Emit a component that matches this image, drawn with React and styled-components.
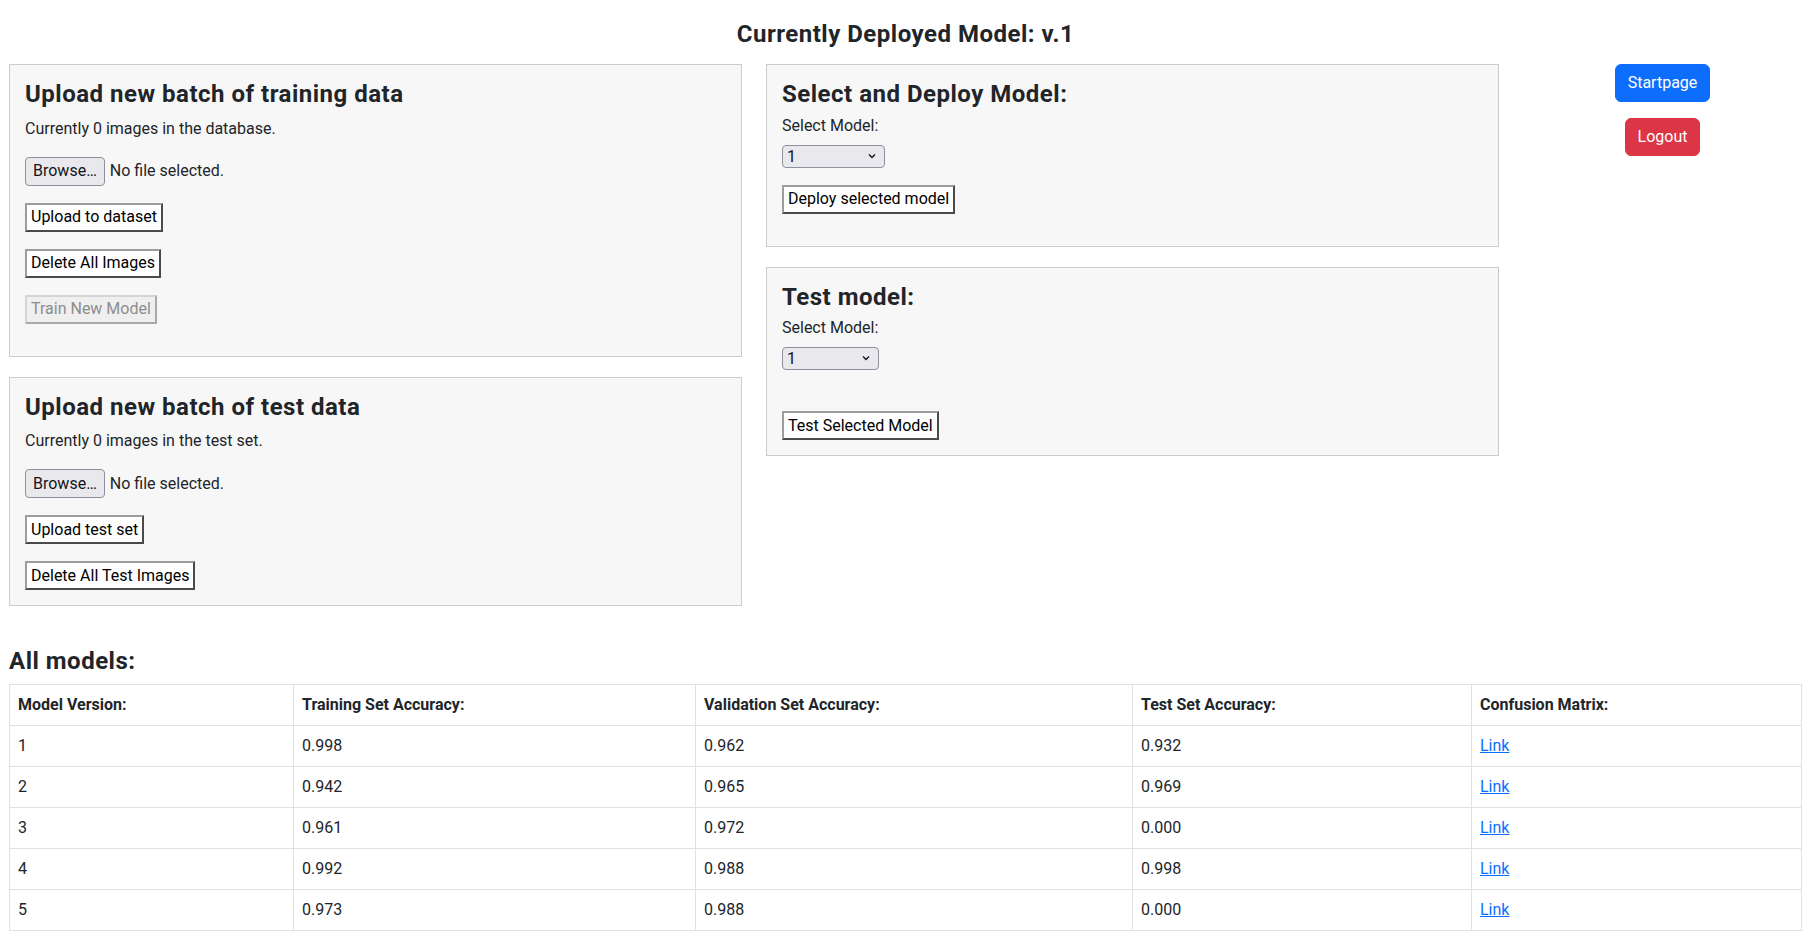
import styled, { createGlobalStyle } from "styled-components";

const GlobalStyle = createGlobalStyle`
  body {
    margin: 0;
    font-family: Roboto, "Noto Sans", sans-serif;
    font-size: 16px;
    line-height: 1.5;
    color: #212529;
    background: #fff;
  }
  * {
    box-sizing: border-box;
  }
`;

const Page = styled.div`
  padding: 0 7px 16px 9px;
`;

const Title = styled.h4`
  margin: 20px 0 15px;
  font-size: 24px;
  font-weight: 700;
  line-height: 1.2;
  letter-spacing: 0.5px;
  text-align: center;
`;

const TopGrid = styled.div`
  display: grid;
  grid-template-columns: 733px 733px 1fr;
  column-gap: 24px;
  align-items: start;
`;

const Column = styled.div`
  display: flex;
  flex-direction: column;
`;

const Card = styled.div`
  background: #f7f7f7;
  border: 1px solid #ccc;
  padding: 15px;
  margin-bottom: 20px;
`;

const CardTitle = styled.h4`
  margin: 0 0 ${({ $tight }) => ($tight ? "5px" : "8px")};
  font-size: 24px;
  font-weight: 700;
  line-height: 1.2;
  letter-spacing: 0.5px;
`;

const Info = styled.p`
  margin: 0 0 16px;
`;

const Label = styled.label`
  display: block;
  margin-bottom: 7px;
`;

const FileRow = styled.div`
  display: flex;
  align-items: center;
  gap: 5px;
  margin-bottom: 17px;
`;

const BrowseButton = styled.button`
  height: 29px;
  padding: 0 7px;
  font: inherit;
  color: #15141a;
  background: #e9e9ed;
  border: 1px solid #8f8f9d;
  border-radius: 4px;
`;

const ActionButton = styled.button`
  display: block;
  height: 29px;
  padding: 0 4px;
  margin-bottom: ${({ $last }) => ($last ? "0" : "17px")};
  font: inherit;
  color: ${({ disabled }) => (disabled ? "#8d8d8d" : "#000")};
  background: ${({ disabled }) => (disabled ? "#efefef" : "#fff")};
  border: 2px solid;
  border-color: ${({ disabled }) =>
    disabled ? "#d4d4d4 #a9a9a9 #a9a9a9 #d4d4d4" : "#9d9d9d #4a4a4a #4a4a4a #9d9d9d"};
`;

const SelectWrap = styled.div`
  position: relative;
  width: ${({ $w }) => $w}px;
  height: 23px;
  margin-bottom: ${({ $gap }) => $gap}px;
`;

const Select = styled.select`
  appearance: none;
  width: 100%;
  height: 100%;
  padding: 0 4px;
  font: inherit;
  line-height: 21px;
  color: #15141a;
  background: #e9e9ed;
  border: 1px solid #8f8f9d;
  border-radius: 4px;
`;

const Chevron = styled.svg`
  position: absolute;
  right: 9px;
  top: 8px;
  pointer-events: none;
`;

const SideButtons = styled.div`
  display: flex;
  flex-direction: column;
  align-items: center;
  gap: 16px;
`;

const NavButton = styled.button`
  padding: 6px 12px;
  font: inherit;
  line-height: 24px;
  color: #fff;
  background: ${({ $variant }) => ($variant === "danger" ? "#dc3545" : "#0d6efd")};
  border: 1px solid ${({ $variant }) => ($variant === "danger" ? "#dc3545" : "#0d6efd")};
  border-radius: 6px;
`;

const SectionTitle = styled.h4`
  margin: 21px 0 8px;
  font-size: 24px;
  font-weight: 700;
  line-height: 1.2;
  letter-spacing: 0.5px;
`;

const Table = styled.table`
  width: 100%;
  table-layout: fixed;
  border-collapse: collapse;
  border: 1px solid #dee2e6;
`;

const Col = styled.col`
  width: ${({ $w }) => ($w ? `${$w}px` : "auto")};
`;

const Th = styled.th`
  padding: 8px;
  text-align: left;
  font-weight: 700;
  border: 1px solid #dee2e6;
`;

const Td = styled.td`
  padding: 8px;
  border: 1px solid #dee2e6;
`;

const MatrixLink = styled.a`
  color: #0d6efd;
  text-decoration: underline;
`;

const models = [
  { version: 1, train: "0.998", val: "0.962", test: "0.932" },
  { version: 2, train: "0.942", val: "0.965", test: "0.969" },
  { version: 3, train: "0.961", val: "0.972", test: "0.000" },
  { version: 4, train: "0.992", val: "0.988", test: "0.998" },
  { version: 5, train: "0.973", val: "0.988", test: "0.000" },
];

function FilePicker() {
  return (
    <FileRow>
      <BrowseButton type="button">Browse…</BrowseButton>
      <span>No file selected.</span>
    </FileRow>
  );
}

function ModelSelect({ width, gap }) {
  return (
    <SelectWrap $w={width} $gap={gap}>
      <Select defaultValue="1">
        {models.map((m) => (
          <option key={m.version} value={m.version}>
            {m.version}
          </option>
        ))}
      </Select>
      <Chevron width="8" height="6" viewBox="0 0 8 6">
        <path d="M1 1.5 L4 4.5 L7 1.5" fill="none" stroke="#15141a" strokeWidth="1.4" />
      </Chevron>
    </SelectWrap>
  );
}

export default function App() {
  return (
    <>
      <GlobalStyle />
      <Page>
        <Title>Currently Deployed Model: v.1</Title>
        <TopGrid>
          <Column>
            <Card>
              <CardTitle>Upload new batch of training data</CardTitle>
              <Info>Currently 0 images in the database.</Info>
              <FilePicker />
              <ActionButton>Upload to dataset</ActionButton>
              <ActionButton>Delete All Images</ActionButton>
              <ActionButton disabled>Train New Model</ActionButton>
            </Card>
            <Card>
              <CardTitle>Upload new batch of test data</CardTitle>
              <Info>Currently 0 images in the test set.</Info>
              <FilePicker />
              <ActionButton>Upload test set</ActionButton>
              <ActionButton $last>Delete All Test Images</ActionButton>
            </Card>
          </Column>
          <Column>
            <Card>
              <CardTitle $tight>Select and Deploy Model:</CardTitle>
              <Label>Select Model:</Label>
              <ModelSelect width={103} gap={17} />
              <ActionButton>Deploy selected model</ActionButton>
            </Card>
            <Card>
              <CardTitle $tight>Test model:</CardTitle>
              <Label>Select Model:</Label>
              <ModelSelect width={97} gap={41} />
              <ActionButton $last>Test Selected Model</ActionButton>
            </Card>
          </Column>
          <SideButtons>
            <NavButton>Startpage</NavButton>
            <NavButton $variant="danger">Logout</NavButton>
          </SideButtons>
        </TopGrid>

        <SectionTitle>All models:</SectionTitle>
        <Table>
          <colgroup>
            <Col $w={284} />
            <Col $w={402} />
            <Col $w={437} />
            <Col $w={339} />
            <Col />
          </colgroup>
          <thead>
            <tr>
              <Th>Model Version:</Th>
              <Th>Training Set Accuracy:</Th>
              <Th>Validation Set Accuracy:</Th>
              <Th>Test Set Accuracy:</Th>
              <Th>Confusion Matrix:</Th>
            </tr>
          </thead>
          <tbody>
            {models.map((m) => (
              <tr key={m.version}>
                <Td>{m.version}</Td>
                <Td>{m.train}</Td>
                <Td>{m.val}</Td>
                <Td>{m.test}</Td>
                <Td>
                  <MatrixLink href="#">Link</MatrixLink>
                </Td>
              </tr>
            ))}
          </tbody>
        </Table>
      </Page>
    </>
  );
}
